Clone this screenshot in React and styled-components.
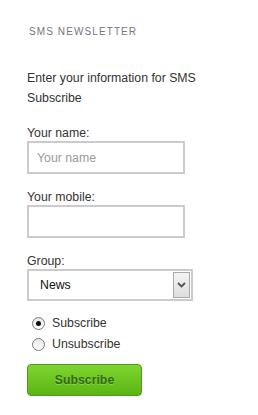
import React from 'react'
import styled, { createGlobalStyle } from 'styled-components'

const GlobalStyle = createGlobalStyle`
  body {
    margin: 0;
    background: #fff;
    font-family: 'Liberation Sans', Arial, sans-serif;
  }
`

const App = () => {
  return (
    <>
      <GlobalStyle />
      <Widget>
        <Title>SMS Newsletter</Title>
        <Intro>Enter your information for SMS Subscribe</Intro>
        <Form onSubmit={(e) => e.preventDefault()}>
          <Field>
            <Label htmlFor="sms-name">Your name:</Label>
            <TextInput id="sms-name" type="text" placeholder="Your name" />
          </Field>
          <Field>
            <Label htmlFor="sms-mobile">Your mobile:</Label>
            <TextInput id="sms-mobile" type="text" />
          </Field>
          <Field>
            <Label htmlFor="sms-group">Group:</Label>
            <SelectBox>
              <Select id="sms-group" defaultValue="news">
                <option value="news">News</option>
              </Select>
              <ArrowButton>
                <svg width="9" height="6" viewBox="0 0 9 6">
                  <path d="M1 1l3.5 3.5L8 1" fill="none" stroke="#555" strokeWidth="1.8" />
                </svg>
              </ArrowButton>
            </SelectBox>
          </Field>
          <Choices>
            <Choice>
              <Radio type="radio" name="action" defaultChecked />
              Subscribe
            </Choice>
            <Choice>
              <Radio type="radio" name="action" />
              Unsubscribe
            </Choice>
          </Choices>
          <SubmitButton type="submit">Subscribe</SubmitButton>
        </Form>
      </Widget>
    </>
  )
}

const Widget = styled.div`
  padding: 26px 0 0 27px;
  color: #333;
`

const Title = styled.h3`
  margin: 0 0 0 2px;
  font-size: 10px;
  line-height: 12px;
  font-weight: 400;
  letter-spacing: 1.1px;
  text-transform: uppercase;
  color: #757580;
`

const Intro = styled.p`
  margin: 30px 0 0 0;
  width: 190px;
  font-size: 12.3px;
  line-height: 20px;
  color: #333;
`

const Form = styled.form`
  display: flex;
  flex-direction: column;
  align-items: flex-start;
  margin-top: 17px;
`

const Field = styled.div`
  display: flex;
  flex-direction: column;
  margin-bottom: 15px;
`

const Label = styled.label`
  font-size: 12.3px;
  line-height: 16px;
  color: #333;
`

const TextInput = styled.input`
  box-sizing: border-box;
  width: 158px;
  height: 33px;
  border: 2px solid #cbcbcb;
  padding: 0 8px;
  font-family: 'Liberation Sans', Arial, sans-serif;
  font-size: 12.3px;
  color: #333;
  outline: none;
  &::placeholder {
    color: #9a9a9a;
  }
`

const SelectBox = styled.div`
  box-sizing: border-box;
  display: flex;
  width: 166px;
  height: 32px;
  border: 2px solid #cbcbcb;
  background: #fff;
`

const Select = styled.select`
  flex: 1;
  appearance: none;
  border: none;
  background: transparent;
  padding: 0 0 0 11px;
  font-family: 'Liberation Sans', Arial, sans-serif;
  font-size: 12.3px;
  color: #111;
  outline: none;
`

const ArrowButton = styled.span`
  box-sizing: border-box;
  display: flex;
  align-items: center;
  justify-content: center;
  width: 17px;
  margin: 1px 1px 1px 0;
  border: 1px solid #a9a9a9;
  background: linear-gradient(#f4f4f4, #dedede);
  pointer-events: none;
`

const Choices = styled.div`
  display: flex;
  flex-direction: column;
  gap: 4px;
  margin: -1px 0 11px 5px;
`

const Choice = styled.label`
  display: flex;
  align-items: center;
  gap: 7px;
  font-size: 12.3px;
  line-height: 17px;
  color: #333;
`

const Radio = styled.input`
  appearance: none;
  box-sizing: border-box;
  width: 13px;
  height: 13px;
  margin: 0;
  border-radius: 50%;
  border: 1px solid #7a7a7a;
  background: linear-gradient(#e6e6e6, #fff);
  display: grid;
  place-items: center;
  &:checked::after {
    content: '';
    width: 5px;
    height: 5px;
    border-radius: 50%;
    background: #111;
  }
`

const SubmitButton = styled.button`
  box-sizing: border-box;
  width: 115px;
  height: 32px;
  border: 1px solid #4c9a1a;
  border-radius: 4px;
  background: linear-gradient(#7fd52e, #5ab514);
  font-family: 'Liberation Sans', Arial, sans-serif;
  font-size: 12.3px;
  font-weight: 700;
  color: #336b10;
  text-shadow: 0 1px 0 rgba(255, 255, 255, 0.25);
  cursor: pointer;
`

export default App
